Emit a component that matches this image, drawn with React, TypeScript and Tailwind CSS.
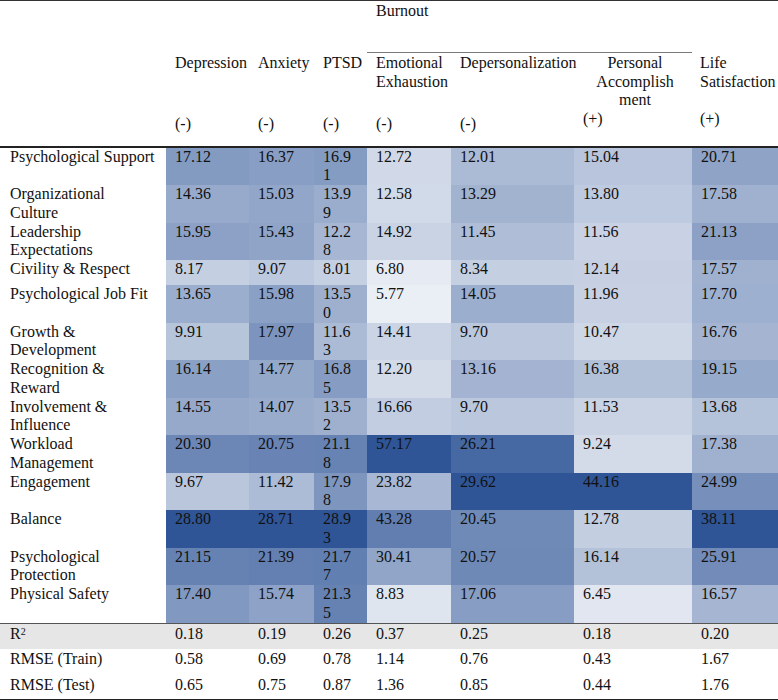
const cols = [166, 83, 65, 53, 84, 123, 118, 86];

const rows: { label: string[]; v: number[] }[] = [
  { label: ["Psychological Support"], v: [17.12, 16.37, 16.91, 12.72, 12.01, 15.04, 20.71] },
  { label: ["Organizational", "Culture"], v: [14.36, 15.03, 13.99, 12.58, 13.29, 13.8, 17.58] },
  { label: ["Leadership", "Expectations"], v: [15.95, 15.43, 12.28, 14.92, 11.45, 11.56, 21.13] },
  { label: ["Civility & Respect"], v: [8.17, 9.07, 8.01, 6.8, 8.34, 12.14, 17.57] },
  { label: ["Psychological Job Fit"], v: [13.65, 15.98, 13.5, 5.77, 14.05, 11.96, 17.7] },
  { label: ["Growth &", "Development"], v: [9.91, 17.97, 11.63, 14.41, 9.7, 10.47, 16.76] },
  { label: ["Recognition &", "Reward"], v: [16.14, 14.77, 16.85, 12.2, 13.16, 16.38, 19.15] },
  { label: ["Involvement &", "Influence"], v: [14.55, 14.07, 13.52, 16.66, 9.7, 11.53, 13.68] },
  { label: ["Workload", "Management"], v: [20.3, 20.75, 21.18, 57.17, 26.21, 9.24, 17.38] },
  { label: ["Engagement"], v: [9.67, 11.42, 17.98, 23.82, 29.62, 44.16, 24.99] },
  { label: ["Balance"], v: [28.8, 28.71, 28.93, 43.28, 20.45, 12.78, 38.11] },
  { label: ["Psychological", "Protection"], v: [21.15, 21.39, 21.77, 30.41, 20.57, 16.14, 25.91] },
  { label: ["Physical Safety"], v: [17.4, 15.74, 21.35, 8.83, 17.06, 6.45, 16.57] },
];

const stats = [
  { label: "RMSE (Train)", v: ["0.58", "0.69", "0.78", "1.14", "0.76", "0.43", "1.67"] },
  { label: "RMSE (Test)", v: ["0.65", "0.75", "0.87", "1.36", "0.85", "0.44", "1.76"] },
];
const r2 = ["0.18", "0.19", "0.26", "0.37", "0.25", "0.18", "0.20"];

// per-column max, shade scales from white to dark blue
const maxes = cols.slice(1).map((_, i) => Math.max(...rows.map((r) => r.v[i])));

function shade(v: number, i: number) {
  const t = v / maxes[i];
  const r = Math.round(255 - (255 - 47) * t);
  const g = Math.round(255 - (255 - 85) * t);
  const b = Math.round(255 - (255 - 151) * t);
  return `rgb(${r}, ${g}, ${b})`;
}

function fmt(v: number, i: number) {
  const s = v.toFixed(2);
  if (i === 2 && s.length > 4) {
    return (
      <>
        {s.slice(0, 4)}
        <br />
        {s.slice(4)}
      </>
    );
  }
  return s;
}

export default function App() {
  return (
    <div className="w-[778px] h-[700px] bg-white text-[#111] text-[16px] leading-[18.75px] font-[family-name:'Liberation_Serif',serif]">
      <table className="w-[778px] table-fixed border-collapse">
        <colgroup>
          {cols.map((w, i) => (
            <col key={i} style={{ width: w }} />
          ))}
        </colgroup>
        <thead>
          <tr className="h-[52px] border-t border-[#333] align-top">
            <th colSpan={4} className="p-0" />
            <th colSpan={3} className="p-0 pl-[9px] pt-[1px] font-normal text-left border-b border-[#7a7a7a]">
              Burnout
            </th>
            <th className="p-0" />
          </tr>
          <tr className="align-top border-b-2 border-[#222] leading-[19px]">
            <th className="p-0 h-[94px]" />
            {[
              ["Depression"],
              ["Anxiety"],
              ["PTSD"],
              ["Emotional", "Exhaustion"],
              ["Depersonalization"],
            ].map((name, i) => (
              <th key={i} className="p-0 pl-[9px] font-normal text-left whitespace-nowrap">
                <div className="h-[61px]">
                  {name.map((n, j) => (
                    <div key={j}>{n}</div>
                  ))}
                </div>
                <div>(-)</div>
              </th>
            ))}
            <th className="p-0 font-normal text-left whitespace-nowrap">
              <div className="h-[56px] pl-[9px] pr-[5px] text-center leading-[19px]">
                <div>Personal</div>
                <div>Accomplish</div>
                <div className="leading-[17px]">ment</div>
              </div>
              <div className="pl-[9px]">(+)</div>
            </th>
            <th className="p-0 pl-[8px] font-normal text-left whitespace-nowrap">
              <div className="h-[56px]">
                <div>Life</div>
                <div>Satisfaction</div>
              </div>
              <div>(+)</div>
            </th>
          </tr>
        </thead>
        <tbody>
          {rows.map((row, ri) => (
            <tr key={ri} className="align-top">
              <td className="p-0 pl-[10px] h-[25px] whitespace-nowrap">
                {row.label.map((l, j) => (
                  <div key={j}>{l}</div>
                ))}
              </td>
              {row.v.map((v, i) => (
                <td
                  key={i}
                  className="p-0 pl-[9px] whitespace-nowrap"
                  style={{ backgroundColor: shade(v, i) }}
                >
                  {fmt(v, i)}
                </td>
              ))}
            </tr>
          ))}
          <tr className="align-top bg-[#e7e6e6] border-t border-[#555]">
            <td className="p-0 pl-[10px] h-[26px] pt-[1px]">
              R<span className="text-[10px] align-top relative top-[-2px]">2</span>
            </td>
            {r2.map((v, i) => (
              <td key={i} className="p-0 pl-[9px] pt-[1px]">
                {v}
              </td>
            ))}
          </tr>
          {stats.map((s, si) => (
            <tr key={si} className={"align-top " + (si === 1 ? "border-b-2 border-[#222]" : "")}>
              <td className={"p-0 pl-[10px] pt-[1px] whitespace-nowrap " + (si === 0 ? "h-[26px]" : "h-[25px]")}>
                {s.label}
              </td>
              {s.v.map((v, i) => (
                <td key={i} className="p-0 pl-[9px] pt-[1px]">
                  {v}
                </td>
              ))}
            </tr>
          ))}
        </tbody>
      </table>
    </div>
  );
}
